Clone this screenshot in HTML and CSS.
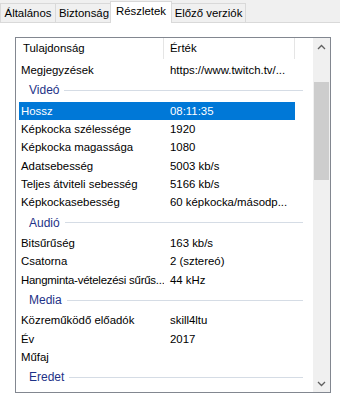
FILE: index.html
```html
<!DOCTYPE html>
<html lang="hu">
<head>
<meta charset="utf-8">
<link rel="stylesheet" href="styles.css">
</head>
<body>
<div class="tabs">
  <div class="tab t1">Általános</div>
  <div class="tab t2">Biztonság</div>
  <div class="tab t3 active">Részletek</div>
  <div class="tab t4">Előző verziók</div>
</div>
<div class="panel">
  <div class="listbox">
    <div class="view">
      <div class="header">
        <div class="hcol c1">Tulajdonság</div>
        <div class="hcol c2">Érték</div>
      </div>
      <div class="row"><span class="c1">Megjegyzések</span><span class="c2">https://www.twitch.tv/...</span></div>
      <div class="group"><span class="gname">Videó</span><span class="gline"></span></div>
      <div class="row sel"><span class="c1">Hossz</span><span class="c2">08:11:35</span></div>
      <div class="row"><span class="c1">Képkocka szélessége</span><span class="c2">1920</span></div>
      <div class="row"><span class="c1">Képkocka magassága</span><span class="c2">1080</span></div>
      <div class="row"><span class="c1">Adatsebesség</span><span class="c2">5003 kb/s</span></div>
      <div class="row"><span class="c1">Teljes átviteli sebesség</span><span class="c2">5166 kb/s</span></div>
      <div class="row"><span class="c1">Képkockasebesség</span><span class="c2">60 képkocka/másodp...</span></div>
      <div class="group"><span class="gname">Audió</span><span class="gline"></span></div>
      <div class="row"><span class="c1">Bitsűrűség</span><span class="c2">163 kb/s</span></div>
      <div class="row"><span class="c1">Csatorna</span><span class="c2">2 (sztereó)</span></div>
      <div class="row"><span class="c1 tight">Hangminta-vételezési sűrűs...</span><span class="c2">44 kHz</span></div>
      <div class="group"><span class="gname">Media</span><span class="gline"></span></div>
      <div class="row"><span class="c1">Közreműködő előadók</span><span class="c2">skill4ltu</span></div>
      <div class="row"><span class="c1">Év</span><span class="c2">2017</span></div>
      <div class="row"><span class="c1">Műfaj</span><span class="c2"></span></div>
      <div class="group"><span class="gname">Eredet</span><span class="gline"></span></div>
    </div>
    <div class="scrollbar">
      <div class="sbtn">
        <svg width="9" height="6" viewBox="0 0 9 6"><path d="M1 5 L4.5 1.5 L8 5" fill="none" stroke="#606060" stroke-width="1.3"/></svg>
      </div>
      <div class="track"><div class="thumb"></div></div>
      <div class="sbtn">
        <svg width="9" height="6" viewBox="0 0 9 6"><path d="M1 1 L4.5 4.5 L8 1" fill="none" stroke="#606060" stroke-width="1.3"/></svg>
      </div>
    </div>
  </div>
</div>
</body>
</html>
```

FILE: styles.css
```css
* { box-sizing: border-box; }
html, body {
  margin: 0;
  padding: 0;
  width: 340px;
  height: 397px;
  overflow: hidden;
  background: #ffffff;
  font-family: "Liberation Sans", Arial, sans-serif;
  font-size: 11.4px;
  color: #000;
}
.tabs {
  height: 22px;
  background: #f0f0f0;
  display: flex;
  align-items: flex-end;
}
.tab {
  height: 19px;
  border: 1px solid #d9d9d9;
  border-bottom: none;
  margin-right: -1px;
  background: #f0f0f0;
  line-height: 18px;
  text-align: center;
  white-space: nowrap;
}
.t1 { width: 56px; }
.t2 { width: 58px; }
.t3 { width: 62px; }
.t4 { width: 75px; }
.tab.active {
  position: relative;
  z-index: 2;
  height: 22px;
  margin: 0 -1px -1px -2px;
  background: #fff;
  line-height: 19px;
}
.panel {
  border-top: 1px solid #d9d9d9;
  padding: 14px 0 0 15px;
  height: 375px;
}
.listbox {
  width: 316px;
  height: 356px;
  border: 1px solid #828790;
  display: flex;
  overflow: hidden;
  background: #fff;
}
.view {
  width: 297px;
  overflow: hidden;
  display: flex;
  flex-direction: column;
}
.header {
  height: 23px;
  flex: none;
  display: flex;
}
.hcol {
  height: 21px;
  line-height: 20px;
  border-right: 1px solid #e5e5e5;
}
.hcol.c1 { width: 148px; padding-left: 7px; }
.hcol.c2 { width: 131px; padding-left: 6px; }
.row {
  height: 18.33px;
  flex: none;
  display: flex;
  align-items: center;
  margin-left: 3px;
  width: 276px;
  white-space: nowrap;
}
.row .c1 { width: 145px; padding-left: 2px; overflow: hidden; }
.row .c2 { width: 131px; padding-left: 6px; overflow: hidden; }
.row .tight { letter-spacing: -0.22px; }
.row.sel {
  background: #0078d7;
  color: #fff;
}
.group {
  height: 22.33px;
  flex: none;
  display: flex;
  align-items: center;
  padding-left: 13px;
  width: 287px;
}
.gname {
  color: #1e3287;
  font-size: 12px;
  margin-right: 5px;
  white-space: nowrap;
}
.gline {
  flex: 1;
  height: 1px;
  background: #d5dce5;
}
.scrollbar {
  width: 17px;
  background: #f0f0f0;
  display: flex;
  flex-direction: column;
}
.sbtn {
  height: 17px;
  flex: none;
  display: flex;
  align-items: center;
  justify-content: center;
}
.track {
  flex: 1;
  padding: 27px 1px 0 1px;
}
.thumb {
  height: 98px;
  background: #cdcdcd;
}
```
